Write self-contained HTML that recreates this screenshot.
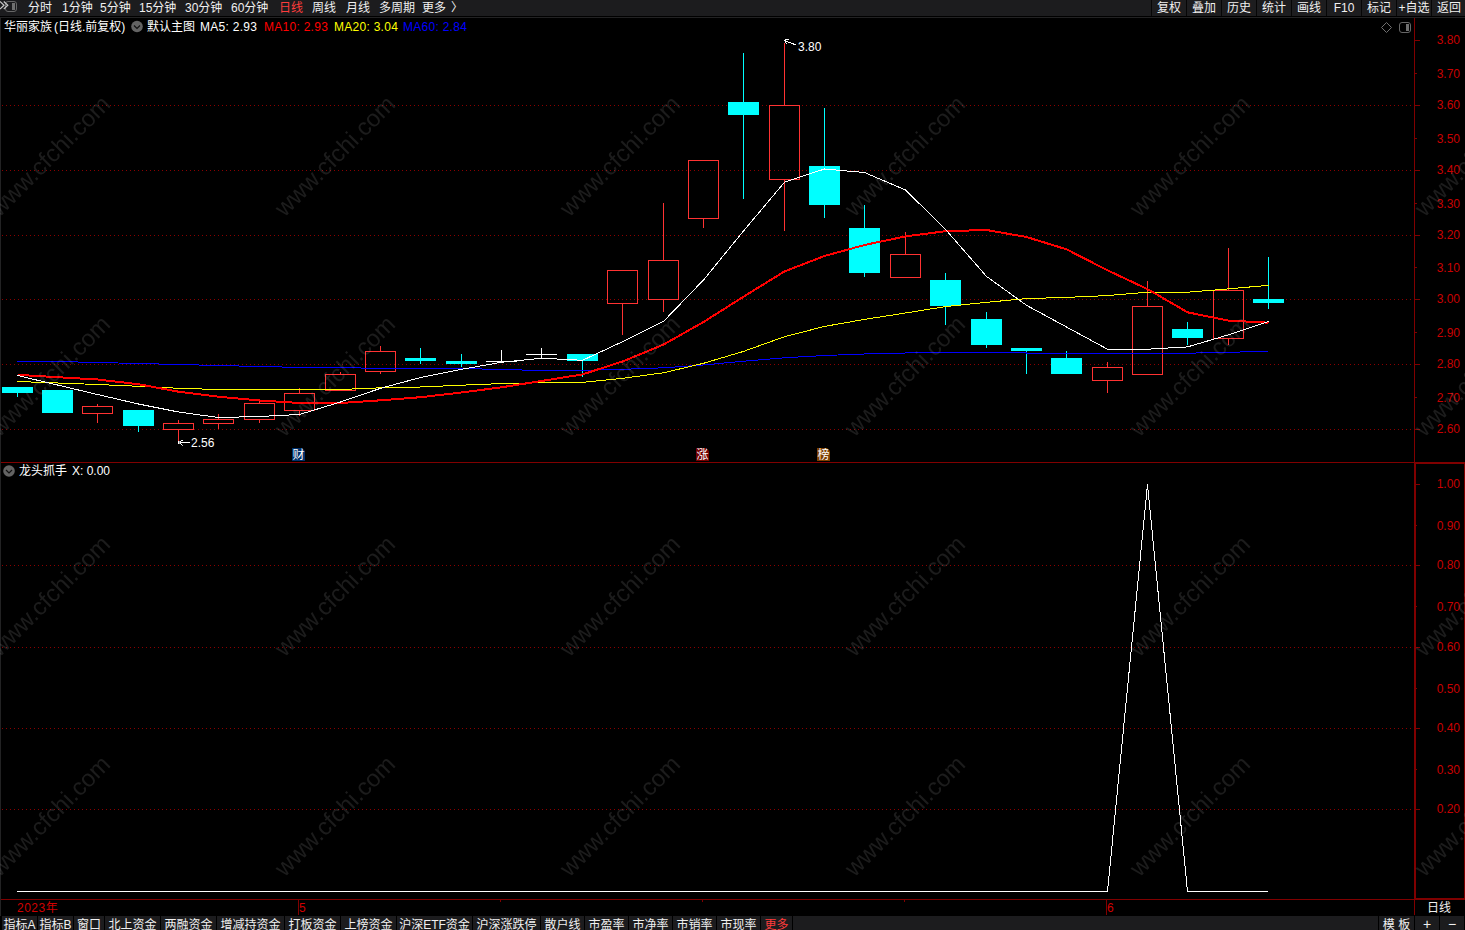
<!DOCTYPE html>
<html lang="zh-CN"><head><meta charset="utf-8"><title>华丽家族 日线</title>
<style>
html,body{margin:0;padding:0;background:#000;}
body{width:1465px;height:930px;overflow:hidden;position:relative;font-family:"Liberation Sans","Noto Sans CJK SC",sans-serif;font-size:12px;color:#fff;}
.t{position:absolute;white-space:nowrap;line-height:14px;height:14px;}
.top{position:absolute;left:0;top:0;width:1465px;height:16px;background:#1c1c1e;}
.top .t{top:1px;color:#f0f0f0;}
.btn{position:absolute;top:0;height:16px;width:34px;background:#1d1d1f;text-align:center;line-height:14px;color:#f0f0f0;}
.btn span{position:relative;top:1px;}
.bot{position:absolute;left:0;top:916px;width:1465px;height:14px;background:#000;}
.tab{position:absolute;top:0;height:14px;background:#1c1c1e;color:#f0f0f0;text-align:center;line-height:14px;overflow:hidden;}
.tab span{position:relative;top:2px;}
.ax{position:absolute;color:#c80000;text-align:right;width:40px;left:1420px;line-height:14px;height:14px;}
.wm{position:absolute;color:#b4b4b4;font-size:24px;line-height:28px;height:28px;width:200px;text-align:center;transform:rotate(-45deg);transform-origin:50% 50%;white-space:nowrap;}
.mk{clip-path:polygon(0 0,10px 0,100% 3px,100% 100%,0 100%);position:absolute;width:13px;height:13px;line-height:15px;font-size:12px;text-align:center;color:#fff;overflow:hidden;}
svg{position:absolute;left:0;top:0;}
</style></head><body>
<svg width="1465" height="930" viewBox="0 0 1465 930" shape-rendering="crispEdges">
<rect x="0" y="17" width="1465" height="1" fill="#222223"/>
<rect x="0" y="17" width="1" height="899" fill="#222223"/>
<line x1="2" y1="105.5" x2="1412" y2="105.5" stroke="#8b0000" stroke-width="1" stroke-dasharray="1 3"/>
<line x1="2" y1="170.5" x2="1412" y2="170.5" stroke="#8b0000" stroke-width="1" stroke-dasharray="1 3"/>
<line x1="2" y1="235.5" x2="1412" y2="235.5" stroke="#8b0000" stroke-width="1" stroke-dasharray="1 3"/>
<line x1="2" y1="299.5" x2="1412" y2="299.5" stroke="#8b0000" stroke-width="1" stroke-dasharray="1 3"/>
<line x1="2" y1="364.5" x2="1412" y2="364.5" stroke="#8b0000" stroke-width="1" stroke-dasharray="1 3"/>
<line x1="2" y1="429.5" x2="1412" y2="429.5" stroke="#8b0000" stroke-width="1" stroke-dasharray="1 3"/>
<line x1="2" y1="565.5" x2="1412" y2="565.5" stroke="#8b0000" stroke-width="1" stroke-dasharray="1 3"/>
<line x1="2" y1="647.5" x2="1412" y2="647.5" stroke="#8b0000" stroke-width="1" stroke-dasharray="1 3"/>
<line x1="2" y1="728.5" x2="1412" y2="728.5" stroke="#8b0000" stroke-width="1" stroke-dasharray="1 3"/>
<line x1="2" y1="809.5" x2="1412" y2="809.5" stroke="#8b0000" stroke-width="1" stroke-dasharray="1 3"/>
<rect x="1414" y="18" width="1" height="897" fill="#800000"/>
<rect x="1" y="462" width="1414" height="1" fill="#800000"/>
<rect x="1" y="899" width="1414" height="1" fill="#800000"/>
<rect x="1414" y="462" width="2" height="438" fill="#800000"/>
<rect x="1414" y="462" width="51" height="2" fill="#800000"/>
<rect x="1414" y="898" width="51" height="2" fill="#800000"/>
<rect x="1464" y="462" width="1" height="438" fill="#800000"/>
<rect x="1415" y="40" width="5" height="1" fill="#800000"/>
<rect x="1415" y="73" width="2" height="1" fill="#800000"/>
<rect x="1415" y="105" width="5" height="1" fill="#800000"/>
<rect x="1415" y="138" width="2" height="1" fill="#800000"/>
<rect x="1415" y="170" width="5" height="1" fill="#800000"/>
<rect x="1415" y="203" width="2" height="1" fill="#800000"/>
<rect x="1415" y="235" width="5" height="1" fill="#800000"/>
<rect x="1415" y="267" width="2" height="1" fill="#800000"/>
<rect x="1415" y="299" width="5" height="1" fill="#800000"/>
<rect x="1415" y="332" width="2" height="1" fill="#800000"/>
<rect x="1415" y="364" width="5" height="1" fill="#800000"/>
<rect x="1415" y="397" width="2" height="1" fill="#800000"/>
<rect x="1415" y="429" width="5" height="1" fill="#800000"/>
<rect x="1416" y="484" width="4" height="1" fill="#800000"/>
<rect x="1416" y="525" width="1" height="1" fill="#800000"/>
<rect x="1416" y="565" width="4" height="1" fill="#800000"/>
<rect x="1416" y="606" width="1" height="1" fill="#800000"/>
<rect x="1416" y="647" width="4" height="1" fill="#800000"/>
<rect x="1416" y="688" width="1" height="1" fill="#800000"/>
<rect x="1416" y="728" width="4" height="1" fill="#800000"/>
<rect x="1416" y="769" width="1" height="1" fill="#800000"/>
<rect x="1416" y="809" width="4" height="1" fill="#800000"/>
<rect x="298" y="900" width="1" height="15" fill="#800000"/>
<rect x="1106" y="900" width="1" height="15" fill="#800000"/>
<rect x="500" y="900" width="1" height="2" fill="#800000"/>
<rect x="702" y="900" width="1" height="2" fill="#800000"/>
<rect x="904" y="900" width="1" height="2" fill="#800000"/>
<rect x="2" y="387" width="31" height="6" fill="#00ffff"/>
<rect x="17" y="393" width="1" height="4" fill="#00ffff"/>
<rect x="42" y="390" width="31" height="23" fill="#00ffff"/>
<rect x="82.5" y="406.5" width="30" height="7" fill="none" stroke="#ff3232" stroke-width="1"/>
<rect x="97" y="404" width="1" height="2" fill="#ff3232"/>
<rect x="97" y="414" width="1" height="9" fill="#ff3232"/>
<rect x="123" y="410" width="31" height="16" fill="#00ffff"/>
<rect x="138" y="426" width="1" height="6" fill="#00ffff"/>
<rect x="163.5" y="423.5" width="30" height="6" fill="none" stroke="#ff3232" stroke-width="1"/>
<rect x="178" y="420" width="1" height="3" fill="#ff3232"/>
<rect x="178" y="430" width="1" height="11" fill="#ff3232"/>
<rect x="203.5" y="419.5" width="30" height="4" fill="none" stroke="#ff3232" stroke-width="1"/>
<rect x="218" y="414" width="1" height="5" fill="#ff3232"/>
<rect x="218" y="424" width="1" height="5" fill="#ff3232"/>
<rect x="244.5" y="403.5" width="30" height="16" fill="none" stroke="#ff3232" stroke-width="1"/>
<rect x="259" y="401" width="1" height="2" fill="#ff3232"/>
<rect x="259" y="420" width="1" height="3" fill="#ff3232"/>
<rect x="284.5" y="393.5" width="30" height="17" fill="none" stroke="#ff3232" stroke-width="1"/>
<rect x="299" y="388" width="1" height="5" fill="#ff3232"/>
<rect x="299" y="411" width="1" height="5" fill="#ff3232"/>
<rect x="325.5" y="374.5" width="30" height="16" fill="none" stroke="#ff3232" stroke-width="1"/>
<rect x="340" y="372" width="1" height="2" fill="#ff3232"/>
<rect x="365.5" y="351.5" width="30" height="20" fill="none" stroke="#ff3232" stroke-width="1"/>
<rect x="380" y="346" width="1" height="5" fill="#ff3232"/>
<rect x="380" y="372" width="1" height="2" fill="#ff3232"/>
<rect x="405" y="358" width="31" height="3" fill="#00ffff"/>
<rect x="420" y="348" width="1" height="10" fill="#00ffff"/>
<rect x="420" y="361" width="1" height="3" fill="#00ffff"/>
<rect x="446" y="361" width="31" height="3" fill="#00ffff"/>
<rect x="461" y="354" width="1" height="7" fill="#00ffff"/>
<rect x="461" y="364" width="1" height="3" fill="#00ffff"/>
<rect x="486" y="361" width="31" height="1" fill="#fff"/>
<rect x="501" y="350" width="1" height="13" fill="#fff"/>
<rect x="526" y="354" width="31" height="1" fill="#fff"/>
<rect x="541" y="348" width="1" height="10" fill="#fff"/>
<rect x="567" y="354" width="31" height="7" fill="#00ffff"/>
<rect x="582" y="361" width="1" height="16" fill="#00ffff"/>
<rect x="607.5" y="270.5" width="30" height="33" fill="none" stroke="#ff3232" stroke-width="1"/>
<rect x="622" y="304" width="1" height="31" fill="#ff3232"/>
<rect x="648.5" y="260.5" width="30" height="39" fill="none" stroke="#ff3232" stroke-width="1"/>
<rect x="663" y="203" width="1" height="57" fill="#ff3232"/>
<rect x="663" y="300" width="1" height="12" fill="#ff3232"/>
<rect x="688.5" y="160.5" width="30" height="58" fill="none" stroke="#ff3232" stroke-width="1"/>
<rect x="703" y="219" width="1" height="9" fill="#ff3232"/>
<rect x="728" y="102" width="31" height="13" fill="#00ffff"/>
<rect x="743" y="53" width="1" height="49" fill="#00ffff"/>
<rect x="743" y="115" width="1" height="84" fill="#00ffff"/>
<rect x="769.5" y="105.5" width="30" height="74" fill="none" stroke="#ff3232" stroke-width="1"/>
<rect x="784" y="43" width="1" height="62" fill="#ff3232"/>
<rect x="784" y="180" width="1" height="51" fill="#ff3232"/>
<rect x="809" y="166" width="31" height="39" fill="#00ffff"/>
<rect x="824" y="108" width="1" height="58" fill="#00ffff"/>
<rect x="824" y="205" width="1" height="13" fill="#00ffff"/>
<rect x="849" y="228" width="31" height="45" fill="#00ffff"/>
<rect x="864" y="205" width="1" height="23" fill="#00ffff"/>
<rect x="864" y="273" width="1" height="4" fill="#00ffff"/>
<rect x="890.5" y="254.5" width="30" height="23" fill="none" stroke="#ff3232" stroke-width="1"/>
<rect x="905" y="232" width="1" height="22" fill="#ff3232"/>
<rect x="930" y="280" width="31" height="26" fill="#00ffff"/>
<rect x="945" y="273" width="1" height="7" fill="#00ffff"/>
<rect x="945" y="306" width="1" height="19" fill="#00ffff"/>
<rect x="971" y="319" width="31" height="26" fill="#00ffff"/>
<rect x="986" y="312" width="1" height="7" fill="#00ffff"/>
<rect x="986" y="345" width="1" height="3" fill="#00ffff"/>
<rect x="1011" y="348" width="31" height="3" fill="#00ffff"/>
<rect x="1026" y="351" width="1" height="23" fill="#00ffff"/>
<rect x="1051" y="358" width="31" height="16" fill="#00ffff"/>
<rect x="1066" y="351" width="1" height="7" fill="#00ffff"/>
<rect x="1092.5" y="367.5" width="30" height="13" fill="none" stroke="#ff3232" stroke-width="1"/>
<rect x="1107" y="362" width="1" height="5" fill="#ff3232"/>
<rect x="1107" y="381" width="1" height="12" fill="#ff3232"/>
<rect x="1132.5" y="306.5" width="30" height="68" fill="none" stroke="#ff3232" stroke-width="1"/>
<rect x="1147" y="281" width="1" height="25" fill="#ff3232"/>
<rect x="1172" y="329" width="31" height="9" fill="#00ffff"/>
<rect x="1187" y="322" width="1" height="7" fill="#00ffff"/>
<rect x="1187" y="338" width="1" height="7" fill="#00ffff"/>
<rect x="1213.5" y="290.5" width="30" height="48" fill="none" stroke="#ff3232" stroke-width="1"/>
<rect x="1228" y="248" width="1" height="42" fill="#ff3232"/>
<rect x="1228" y="339" width="1" height="6" fill="#ff3232"/>
<rect x="1253" y="299" width="31" height="4" fill="#00ffff"/>
<rect x="1268" y="257" width="1" height="42" fill="#00ffff"/>
<rect x="1268" y="303" width="1" height="6" fill="#00ffff"/>
<polyline points="17.5,361.1 57.5,361.5 97.5,362.5 138.5,363.5 178.5,364.5 218.5,365.5 259.5,366.5 299.5,367.4 340.5,367.8 380.5,368.2 420.5,368.4 461.5,368.5 501.5,369.5 541.5,370.5 582.5,370.4 622.5,369.3 663.5,367.8 703.5,365.0 743.5,361.2 784.5,357.8 824.5,355.5 864.5,354.0 905.5,353.0 945.5,352.5 986.5,352.8 1026.5,353.0 1066.5,353.4 1107.5,353.8 1147.5,353.8 1187.5,353.2 1228.5,352.3 1268.5,351.3" fill="none" stroke="#0000ff" stroke-width="1" stroke-linejoin="round"/>
<polyline points="17.5,381.5 57.5,383.0 97.5,384.5 138.5,386.3 178.5,388.3 218.5,389.5 259.5,389.5 299.5,389.5 340.5,389.5 380.5,387.8 420.5,387.0 461.5,385.2 501.5,383.6 541.5,382.7 582.5,382.4 622.5,378.3 663.5,372.8 703.5,363.3 743.5,351.4 784.5,336.7 824.5,326.4 864.5,319.4 905.5,313.0 945.5,306.6 986.5,302.3 1026.5,298.6 1066.5,297.4 1107.5,295.6 1147.5,292.2 1187.5,292.2 1228.5,288.9 1268.5,285.3" fill="none" stroke="#ffff00" stroke-width="1" stroke-linejoin="round"/>
<polyline points="17.5,374.8 57.5,377.2 97.5,379.5 138.5,384.2 178.5,391.7 218.5,396.7 259.5,400.5 299.5,403.0 340.5,403.0 380.5,400.3 420.5,397.2 461.5,392.5 501.5,387.3 541.5,381.0 582.5,374.4 622.5,361.5 663.5,344.6 703.5,322.0 743.5,296.7 784.5,271.4 824.5,256.0 864.5,245.0 905.5,236.4 945.5,231.2 986.5,230.0 1026.5,237.0 1066.5,249.3 1107.5,270.3 1147.5,289.1 1187.5,312.3 1228.5,320.6 1268.5,322.7" fill="none" stroke="#ff0000" stroke-width="2" stroke-linejoin="round"/>
<polyline points="17.5,375.5 57.5,385.0 97.5,394.5 138.5,404.0 178.5,412.0 218.5,417.5 259.5,416.5 299.5,414.5 340.5,402.0 380.5,388.3 420.5,377.5 461.5,369.3 501.5,362.3 541.5,358.2 582.5,360.3 622.5,341.7 663.5,321.4 703.5,280.0 743.5,231.0 784.5,182.2 824.5,169.0 864.5,172.5 905.5,190.0 945.5,229.4 986.5,276.4 1026.5,305.3 1066.5,327.0 1107.5,349.2 1147.5,349.2 1187.5,346.9 1228.5,334.8 1268.5,321.4" fill="none" stroke="#ffffff" stroke-width="1" stroke-linejoin="round"/>
<polyline points="17,891.5 1107.5,891.5 1147.5,484.5 1187.5,891.5 1268,891.5" fill="none" stroke="#fff" stroke-width="1"/>
</svg>
<svg width="1465" height="930" viewBox="0 0 1465 930" style="z-index:5">
<path d="M784.5 40.5 L796 45 M784.5 39.5 h4 M785 41 l1.5 3" stroke="#fff" stroke-width="1" fill="none" shape-rendering="crispEdges"/>
<g fill="#fff" shape-rendering="crispEdges"><rect x="178" y="442" width="12" height="1"/><rect x="178" y="441" width="1" height="3"/><rect x="179" y="441" width="1" height="3" fill="#999"/><rect x="180" y="441" width="1" height="1"/><rect x="181" y="440" width="2" height="1"/><rect x="180" y="443" width="1" height="1"/><rect x="181" y="444" width="1" height="1"/><rect x="182" y="445" width="1" height="1" fill="#bbb"/></g>
<rect x="5.5" y="1.5" width="11" height="10" rx="2.5" fill="none" stroke="#666" stroke-width="1"/>
<rect x="12" y="3" width="3" height="7" fill="#707070"/>
<path d="M0 1.5 L4 5.2 L0 9 M3.8 1.5 L7.8 5.2 L3.8 9" stroke="#c8c8c8" stroke-width="1.2" fill="none"/>
<circle cx="137" cy="26.5" r="5.8" fill="#636363"/>
<path d="M134 25.5 L137 28.5 L140 25.5" stroke="#111" stroke-width="1.2" fill="none"/>
<circle cx="9" cy="471" r="5.8" fill="#636363"/>
<path d="M6 470 L9 473 L12 470" stroke="#111" stroke-width="1.2" fill="none"/>
<path d="M1386.5 22.5 L1391.5 27.5 L1386.5 32.5 L1381.5 27.5 Z" stroke="#707070" stroke-width="1" fill="none"/>
<rect x="1399.500" y="22.5" width="11" height="10" rx="2.5" fill="none" stroke="#666" stroke-width="1"/>
<rect x="1406" y="24" width="3" height="7" fill="#707070"/>
</svg>
<div class="mk" style="left:292px;top:448px;background:#00306a;">财</div>
<div class="mk" style="left:696px;top:448px;background:#720000;">涨</div>
<div class="mk" style="left:817px;top:448px;background:#7e4000;">榜</div>
<div class="top">
<div class="t" style="left:28px">分时</div>
<div class="t" style="left:62px">1分钟</div>
<div class="t" style="left:100px">5分钟</div>
<div class="t" style="left:139px">15分钟</div>
<div class="t" style="left:185px">30分钟</div>
<div class="t" style="left:231px">60分钟</div>
<div class="t" style="left:279px;color:#ff3c3c">日线</div>
<div class="t" style="left:312px">周线</div>
<div class="t" style="left:346px">月线</div>
<div class="t" style="left:379px">多周期</div>
<div class="t" style="left:422px">更多</div>
<div class="t" style="left:451px">〉</div>
<div class="btn" style="left:1152px"><span>复权</span></div>
<div class="btn" style="left:1187px"><span>叠加</span></div>
<div class="btn" style="left:1222px"><span>历史</span></div>
<div class="btn" style="left:1257px"><span>统计</span></div>
<div class="btn" style="left:1292px"><span>画线</span></div>
<div class="btn" style="left:1327px"><span>F10</span></div>
<div class="btn" style="left:1362px"><span>标记</span></div>
<div class="btn" style="left:1397px"><span>+自选</span></div>
<div class="btn" style="left:1432px"><span>返回</span></div>
</div>
<div style="position:absolute;left:0;top:16px;width:1465px;height:1px;background:#000"></div>
<div style="position:absolute;left:1151px;top:0;width:1px;height:16px;background:#060606"></div>
<div style="position:absolute;left:1186px;top:0;width:1px;height:16px;background:#060606"></div>
<div style="position:absolute;left:1221px;top:0;width:1px;height:16px;background:#060606"></div>
<div style="position:absolute;left:1256px;top:0;width:1px;height:16px;background:#060606"></div>
<div style="position:absolute;left:1291px;top:0;width:1px;height:16px;background:#060606"></div>
<div style="position:absolute;left:1326px;top:0;width:1px;height:16px;background:#060606"></div>
<div style="position:absolute;left:1361px;top:0;width:1px;height:16px;background:#060606"></div>
<div style="position:absolute;left:1396px;top:0;width:1px;height:16px;background:#060606"></div>
<div style="position:absolute;left:1431px;top:0;width:1px;height:16px;background:#060606"></div>
<div class="t" style="left:4px;top:20px;color:#fff">华丽家族<i style="margin-left:2px"></i>(日线.前复权)</div>
<div class="t" style="left:147px;top:20px;color:#fff">默认主图</div>
<div class="t" style="left:200px;top:20px;color:#fff;letter-spacing:0.27px">MA5: 2.93</div>
<div class="t" style="left:264px;top:20px;color:#ff0000;letter-spacing:0.27px">MA10: 2.93</div>
<div class="t" style="left:334px;top:20px;color:#ffff00;letter-spacing:0.27px">MA20: 3.04</div>
<div class="t" style="left:403px;top:20px;color:#0000ff;letter-spacing:0.27px">MA60: 2.84</div>
<div class="t" style="left:19px;top:464px;">龙头抓手</div>
<div class="t" style="left:72px;top:464px;">X: 0.00</div>
<div class="t" style="left:798px;top:40px;">3.80</div>
<div class="t" style="left:191px;top:436px;">2.56</div>
<div class="ax" style="top:33px">3.80</div>
<div class="ax" style="top:67px">3.70</div>
<div class="ax" style="top:98px">3.60</div>
<div class="ax" style="top:132px">3.50</div>
<div class="ax" style="top:163px">3.40</div>
<div class="ax" style="top:197px">3.30</div>
<div class="ax" style="top:228px">3.20</div>
<div class="ax" style="top:261px">3.10</div>
<div class="ax" style="top:292px">3.00</div>
<div class="ax" style="top:326px">2.90</div>
<div class="ax" style="top:357px">2.80</div>
<div class="ax" style="top:391px">2.70</div>
<div class="ax" style="top:422px">2.60</div>
<div class="ax" style="top:477px">1.00</div>
<div class="ax" style="top:519px">0.90</div>
<div class="ax" style="top:558px">0.80</div>
<div class="ax" style="top:600px">0.70</div>
<div class="ax" style="top:640px">0.60</div>
<div class="ax" style="top:682px">0.50</div>
<div class="ax" style="top:721px">0.40</div>
<div class="ax" style="top:763px">0.30</div>
<div class="ax" style="top:802px">0.20</div>
<div class="t" style="left:17px;top:901px;color:#d00000;letter-spacing:0.5px">2023年</div>
<div class="t" style="left:299px;top:901px;color:#d00000">5</div>
<div class="t" style="left:1107px;top:901px;color:#d00000">6</div>
<div class="t" style="left:1427px;top:901px;color:#f0f0f0">日线</div>
<div class="bot">
<div class="tab" style="left:2px;width:35px"><span>指标A</span></div>
<div class="tab" style="left:38px;width:35px"><span>指标B</span></div>
<div class="tab" style="left:74px;width:30px"><span>窗口</span></div>
<div class="tab" style="left:105px;width:55px"><span>北上资金</span></div>
<div class="tab" style="left:161px;width:55px"><span>两融资金</span></div>
<div class="tab" style="left:217px;width:67px"><span>增减持资金</span></div>
<div class="tab" style="left:285px;width:55px"><span>打板资金</span></div>
<div class="tab" style="left:341px;width:55px"><span>上榜资金</span></div>
<div class="tab" style="left:397px;width:75px"><span>沪深ETF资金</span></div>
<div class="tab" style="left:473px;width:67px"><span>沪深涨跌停</span></div>
<div class="tab" style="left:541px;width:43px"><span>散户线</span></div>
<div class="tab" style="left:585px;width:43px"><span>市盈率</span></div>
<div class="tab" style="left:629px;width:43px"><span>市净率</span></div>
<div class="tab" style="left:673px;width:43px"><span>市销率</span></div>
<div class="tab" style="left:717px;width:43px"><span>市现率</span></div>
<div class="tab" style="left:761px;width:31px;color:#ff3c3c"><span>更多</span></div>
<div class="tab" style="left:793px;width:585px;"></div>
<div class="tab" style="left:1379px;width:35px"><span>模 板</span></div>
<div class="tab" style="left:1415px;width:24px"><span style="font-size:14px;top:1px">+</span></div>
<div class="tab" style="left:1440px;width:24px"><span style="font-size:14px;top:1px">−</span></div>
</div>
<div style="position:absolute;left:0;top:0;width:1465px;height:930px;overflow:hidden;opacity:0.155;will-change:transform;z-index:10;pointer-events:none">
<div class="wm" style="left:-50.0px;top:141.5px">www.cfchi.com</div>
<div class="wm" style="left:235.0px;top:141.5px">www.cfchi.com</div>
<div class="wm" style="left:520.0px;top:141.5px">www.cfchi.com</div>
<div class="wm" style="left:805.0px;top:141.5px">www.cfchi.com</div>
<div class="wm" style="left:1090.0px;top:141.5px">www.cfchi.com</div>
<div class="wm" style="left:1375.0px;top:141.5px">www.cfchi.com</div>
<div class="wm" style="left:-50.0px;top:361.5px">www.cfchi.com</div>
<div class="wm" style="left:235.0px;top:361.5px">www.cfchi.com</div>
<div class="wm" style="left:520.0px;top:361.5px">www.cfchi.com</div>
<div class="wm" style="left:805.0px;top:361.5px">www.cfchi.com</div>
<div class="wm" style="left:1090.0px;top:361.5px">www.cfchi.com</div>
<div class="wm" style="left:1375.0px;top:361.5px">www.cfchi.com</div>
<div class="wm" style="left:-50.0px;top:581.5px">www.cfchi.com</div>
<div class="wm" style="left:235.0px;top:581.5px">www.cfchi.com</div>
<div class="wm" style="left:520.0px;top:581.5px">www.cfchi.com</div>
<div class="wm" style="left:805.0px;top:581.5px">www.cfchi.com</div>
<div class="wm" style="left:1090.0px;top:581.5px">www.cfchi.com</div>
<div class="wm" style="left:1375.0px;top:581.5px">www.cfchi.com</div>
<div class="wm" style="left:-50.0px;top:801.5px">www.cfchi.com</div>
<div class="wm" style="left:235.0px;top:801.5px">www.cfchi.com</div>
<div class="wm" style="left:520.0px;top:801.5px">www.cfchi.com</div>
<div class="wm" style="left:805.0px;top:801.5px">www.cfchi.com</div>
<div class="wm" style="left:1090.0px;top:801.5px">www.cfchi.com</div>
<div class="wm" style="left:1375.0px;top:801.5px">www.cfchi.com</div>
</div>
</body></html>
